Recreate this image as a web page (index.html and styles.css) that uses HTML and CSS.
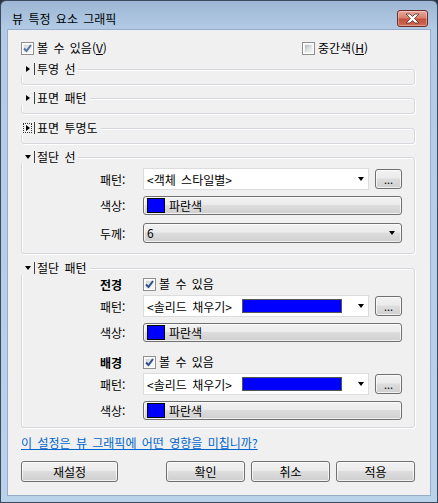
FILE: index.html
```html
<!DOCTYPE html>
<html lang="ko">
<head>
<meta charset="utf-8">
<title>뷰 특정 요소 그래픽</title>
<link rel="stylesheet" href="styles.css">
</head>
<body>
<div class="window">
  <div class="titlebar">
    <span class="title">뷰 특정 요소 그래픽</span>
    <span class="close">
      <svg width="17" height="11" viewBox="0 0 17 11"><path d="M2 1 H6 L8.5 3.5 L11 1 H15 L10.5 5.5 L15 10 H11 L8.5 7.5 L6 10 H2 L6.5 5.5 Z" fill="#fff" stroke="#5a2a2a" stroke-width="0.8" stroke-linejoin="round"/></svg>
    </span>
  </div>
  <div class="client">
    <div class="toprow">
      <label class="chk"><span class="box checked light"><svg viewBox="0 0 9 9" width="9" height="9"><path d="M1 4.5 L3.5 7 L8 1" fill="none" stroke="#5870a8" stroke-width="2"/></svg></span><span class="ct">볼 수 있음(<u>V</u>)</span></label>
      <label class="chk"><span class="box"></span><span class="ct">중간색(<u>H</u>)</span></label>
    </div>

    <div class="group collapsed g1">
      <div class="ghead"><span class="tw"><span class="tri-r"></span></span><span class="sep"></span><span class="gt">투영 선</span></div>
    </div>
    <div class="group collapsed g2">
      <div class="ghead"><span class="tw"><span class="tri-r"></span></span><span class="sep"></span><span class="gt">표면 패턴</span></div>
    </div>
    <div class="group collapsed g3">
      <div class="ghead"><span class="tw focus"><span class="tri-r"></span></span><span class="sep"></span><span class="gt">표면 투명도</span></div>
    </div>

    <div class="group g4">
      <div class="ghead"><span class="tw"><span class="tri-d"></span></span><span class="sep"></span><span class="gt">절단 선</span></div>
      <div class="row r-first">
        <span class="lbl">패턴:</span>
        <div class="combo"><span class="cv">&lt;객체 스타일별&gt;</span><span class="arr"></span></div>
        <button class="btn dots">...</button>
      </div>
      <div class="row r-color">
        <span class="lbl">색상:</span>
        <button class="btn colorbtn"><span class="swatch"></span><span>파란색</span></button>
      </div>
      <div class="row r-thick">
        <span class="lbl">두께:</span>
        <div class="btn dropdown"><span class="cv">6</span><span class="arr"></span></div>
      </div>
    </div>

    <div class="group g5">
      <div class="ghead"><span class="tw"><span class="tri-d"></span></span><span class="sep"></span><span class="gt">절단 패턴</span></div>
      <div class="row r-sub">
        <span class="lbl bold">전경</span>
        <label class="chk"><span class="box checked"><svg viewBox="0 0 9 9" width="9" height="9"><path d="M1 4.5 L3.5 7 L8 1" fill="none" stroke="#2f4c8c" stroke-width="2"/></svg></span><span class="ct">볼 수 있음</span></label>
      </div>
      <div class="row r-pat">
        <span class="lbl">패턴:</span>
        <div class="combo"><span class="cv">&lt;솔리드 채우기&gt;</span><span class="bar"></span><span class="arr"></span></div>
        <button class="btn dots">...</button>
      </div>
      <div class="row r-color">
        <span class="lbl">색상:</span>
        <button class="btn colorbtn"><span class="swatch"></span><span>파란색</span></button>
      </div>
      <div class="row r-sub r-sub2">
        <span class="lbl bold">배경</span>
        <label class="chk"><span class="box checked"><svg viewBox="0 0 9 9" width="9" height="9"><path d="M1 4.5 L3.5 7 L8 1" fill="none" stroke="#2f4c8c" stroke-width="2"/></svg></span><span class="ct">볼 수 있음</span></label>
      </div>
      <div class="row r-pat">
        <span class="lbl">패턴:</span>
        <div class="combo"><span class="cv">&lt;솔리드 채우기&gt;</span><span class="bar"></span><span class="arr"></span></div>
        <button class="btn dots">...</button>
      </div>
      <div class="row r-color">
        <span class="lbl">색상:</span>
        <button class="btn colorbtn"><span class="swatch"></span><span>파란색</span></button>
      </div>
    </div>

    <a class="link" href="#">이 설정은 뷰 그래픽에 어떤 영향을 미칩니까?</a>

    <div class="buttons">
      <button class="btn b-reset">재설정</button>
      <button class="btn b-ok">확인</button>
      <button class="btn b-cancel">취소</button>
      <button class="btn b-apply">적용</button>
    </div>
  </div>
</div>
</body>
</html>
```

FILE: styles.css
```css
* { box-sizing: border-box; }
html, body { margin: 0; padding: 0; }
body {
  background: #2a3644;
  font-family: "Noto Sans CJK KR", "Noto Sans", sans-serif;
  font-size: 12px;
  word-spacing: 2px;
  color: #000;
  width: 438px;
  height: 503px;
  overflow: hidden;
}
.window {
  width: 438px;
  height: 503px;
  border: 1px solid #3b4b5e;
  border-radius: 6px 6px 0 0;
  background: linear-gradient(to bottom, #9db7d4 0, #b3cbe5 29px, #bad2ea 100%);
  padding: 0 7px 7px 7px;
  display: flex;
  flex-direction: column;
}
.titlebar {
  height: 29px;
  display: flex;
  align-items: flex-start;
  flex-shrink: 0;
}
.title {
  margin-left: 4px;
  margin-top: 10px;
  line-height: 16px;
  font-size: 12px;
  color: #000;
}
.close {
  margin-left: auto;
  margin-right: 2px;
  margin-top: 9px;
  width: 31px;
  height: 17px;
  border: 1px solid #6e2b2b;
  border-radius: 3px;
  background: linear-gradient(to bottom, #e9a99a 0%, #d7806e 45%, #c4503c 55%, #d06a52 100%);
  display: flex;
  align-items: center;
  justify-content: center;
  box-shadow: inset 0 0 0 1px rgba(255,255,255,0.35);
}
.client {
  flex: 1;
  background: #f0f0f0;
  box-shadow: 0 0 0 1px #97accb;
  display: flex;
  flex-direction: column;
  padding: 11px 15px 0 13px;
}
.toprow {
  height: 13px;
  display: grid;
  grid-template-columns: 281px auto;
  align-items: center;
}
.chk {
  display: flex;
  align-items: center;
  height: 14px;
  line-height: 14px;
}
.chk .ct { margin-left: 3px; white-space: nowrap; }
.box {
  width: 13px;
  height: 13px;
  border: 1px solid #8e8f8f;
  background: #fff;
  position: relative;
  display: flex;
  align-items: center;
  justify-content: center;
  flex-shrink: 0;
}
.box::before {
  content: "";
  position: absolute;
  left: 1px; top: 1px; right: 1px; bottom: 1px;
  background: linear-gradient(135deg, #b3b8bf 0%, #e4e6e8 60%, #f4f4f4 100%);
  border: 1px solid #f4f4f4;
}
.box svg { position: relative; }
.box.checked::before { background: linear-gradient(135deg, #cfd3d9 0%, #eef0f2 70%, #f8f8f8 100%); }

.group {
  border: 1px solid #d5d9dd;
  border-radius: 3px;
  box-shadow: inset 1px 1px 0 #fff, 1px 1px 0 #fff;
  display: flex;
  flex-direction: column;
  flex-shrink: 0;
}
.group.collapsed { height: 16px; }
.g1 { margin-top: 15px; }
.g2 { margin-top: 13px; }
.g3 { margin-top: 14px; }
.g4 { margin-top: 13px; height: 97px; }
.g5 { margin-top: 14px; height: 160px; }

.ghead {
  height: 14px;
  margin: -8px 0 0 -1px;
  align-self: flex-start;
  background: #f0f0f0;
  display: flex;
  align-items: center;
  padding-right: 3px;
}
.tw {
  width: 13px;
  height: 14px;
  display: flex;
  align-items: center;
  justify-content: center;
}
.tw.focus {
  outline: 1px dotted #333;
  outline-offset: -3px;
}
.tri-r {
  width: 0; height: 0;
  border-top: 3.5px solid transparent;
  border-bottom: 3.5px solid transparent;
  border-left: 4px solid #000;
}
.tri-d {
  width: 0; height: 0;
  border-left: 3.5px solid transparent;
  border-right: 3.5px solid transparent;
  border-top: 4px solid #000;
}
.sep {
  width: 1px;
  height: 12px;
  background: #404040;
}
.gt { margin-left: 2px; white-space: nowrap; line-height: 14px; }

.row {
  display: flex;
  align-items: center;
  flex-shrink: 0;
}
.lbl {
  width: 43px;
  margin-left: 78px;
  white-space: nowrap;
}
.lbl.bold { font-weight: bold; }
.r-first { margin-top: 4px; height: 22px; }
.g4 .r-color { margin-top: 6px; height: 19px; }
.r-thick { margin-top: 8px; height: 20px; }
.r-sub { margin-top: 2px; height: 14px; }
.r-sub2 { margin-top: 13px; }
.r-pat { margin-top: 4px; height: 22px; }
.g5 .r-color { margin-top: 6px; height: 19px; }

.combo {
  width: 226px;
  height: 22px;
  background: #fff;
  border: 1px solid #dcdcdc;
  display: flex;
  align-items: center;
  padding: 0 4px 0 3px;
}
.cv { white-space: nowrap; }
.arr {
  margin-left: auto;
  width: 0; height: 0;
  border-left: 3.5px solid transparent;
  border-right: 3.5px solid transparent;
  border-top: 4px solid #000;
}
.bar {
  width: 100px;
  height: 14px;
  background: #0000ff;
  border: 1px solid #555;
  margin-left: 10px;
}
.btn {
  font-family: inherit;
  font-size: 12px;
  word-spacing: 2px;
  color: #000;
  border: 1px solid #707070;
  border-radius: 3px;
  background: linear-gradient(to bottom, #f2f2f2 0%, #ebebeb 45%, #dddddd 50%, #cfcfcf 100%);
  box-shadow: inset 0 0 0 1px rgba(255,255,255,0.7);
  padding: 0;
  margin: 0;
  line-height: 14px;
}
.dots {
  width: 27px;
  height: 20px;
  margin-left: 6px;
  font-size: 11px;
  line-height: 12px;
  letter-spacing: 0;
}
.colorbtn {
  width: 259px;
  height: 19px;
  display: flex;
  align-items: center;
  padding-left: 3px;
}
.swatch {
  width: 18px;
  height: 15px;
  background: #0000ff;
  border: 1px solid #000;
  margin-right: 4px;
}
.dropdown {
  width: 259px;
  height: 20px;
  display: flex;
  align-items: center;
  padding: 0 6px 0 3px;
}

.link {
  margin-top: 8px;
  height: 14px;
  line-height: 14px;
  color: #0066cc;
  text-decoration: underline;
  align-self: flex-start;
  white-space: nowrap;
}
.buttons {
  margin-top: 11px;
  display: flex;
  height: 21px;
}
.buttons .btn { height: 21px; }
.b-reset { width: 97px; }
.b-ok { width: 79px; margin-left: 48px; }
.b-cancel { width: 79px; margin-left: 6px; }
.b-apply { width: 79px; margin-left: 6px; }
```
